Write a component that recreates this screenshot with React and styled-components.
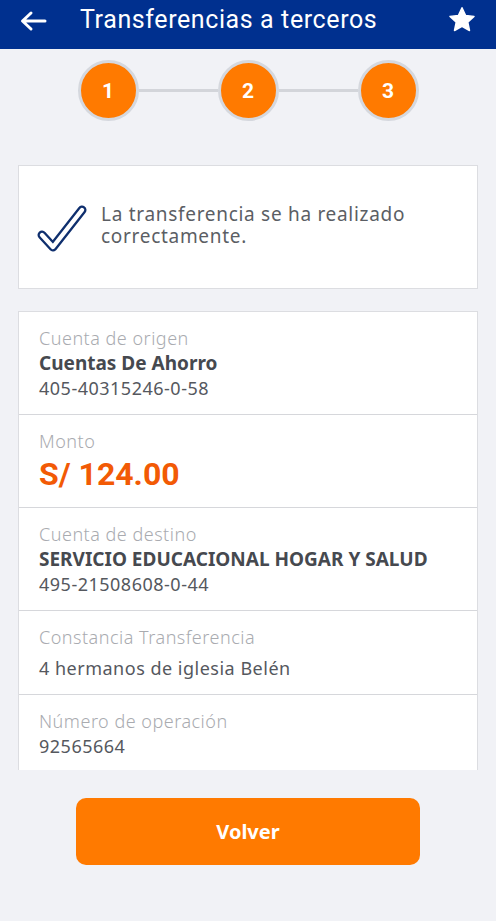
import React from "react";
import styled, { createGlobalStyle } from "styled-components";

const GlobalStyle = createGlobalStyle`
  body {
    margin: 0;
    background: #f1f2f6;
    font-family: "Noto Sans", Roboto, sans-serif;
  }
`;

const steps = [1, 2, 3];

const details = [
  { label: "Cuenta de origen", title: "Cuentas De Ahorro", value: "405-40315246-0-58" },
  { label: "Monto", amount: "S/ 124.00" },
  { label: "Cuenta de destino", title: "SERVICIO EDUCACIONAL HOGAR Y SALUD", value: "495-21508608-0-44" },
  { label: "Constancia Transferencia", value: "4 hermanos de iglesia Belén", spaced: true },
  { label: "Número de operación", value: "92565664", last: true },
];

const App = () => {
  return (
    <Page>
      <GlobalStyle />
      <Header>
        <BackIcon width="28" height="22" viewBox="0 0 28 22">
          <path d="M26 11H4M12 3L3.5 11L12 19" fill="none" stroke="#fff" strokeWidth="3" strokeLinecap="round" strokeLinejoin="round" />
        </BackIcon>
        <Title>Transferencias a terceros</Title>
        <StarIcon width="30" height="30" viewBox="0 0 24 24">
          <path d="M12 2.2l2.9 6.2 6.7.7-5 4.6 1.4 6.7L12 17l-6 3.4 1.4-6.7-5-4.6 6.7-.7z" fill="#fff" stroke="#fff" strokeWidth="1.2" strokeLinejoin="round" />
        </StarIcon>
      </Header>

      <Stepper>
        {steps.map((n, i) => (
          <React.Fragment key={n}>
            {i > 0 && <Connector />}
            <StepCircle>{n}</StepCircle>
          </React.Fragment>
        ))}
      </Stepper>

      <SuccessCard>
        <CheckIcon width="50" height="48" viewBox="0 0 50 48">
          <path d="M5 31L16 43L45 6" fill="none" stroke="#0f2f6e" strokeWidth="9" strokeLinecap="round" strokeLinejoin="round" />
          <path d="M5 31L16 43L45 6" fill="none" stroke="#fff" strokeWidth="4.4" strokeLinecap="round" strokeLinejoin="round" />
        </CheckIcon>
        <SuccessText>La transferencia se ha realizado correctamente.</SuccessText>
      </SuccessCard>

      <DetailCard>
        {details.map((d) => (
          <Row key={d.label} last={d.last}>
            <Label>{d.label}</Label>
            {d.title && <Strong>{d.title}</Strong>}
            {d.amount && <Amount>{d.amount}</Amount>}
            {d.value && <Value spaced={d.spaced}>{d.value}</Value>}
          </Row>
        ))}
      </DetailCard>

      <Actions>
        <Button>Volver</Button>
      </Actions>
    </Page>
  );
};

const Page = styled.div`
  min-height: 921px;
  background: #f1f2f6;
  display: flex;
  flex-direction: column;
`;

const Header = styled.header`
  height: 49px;
  background: #00308f;
  display: flex;
  align-items: center;
  padding: 0 19px 10px 19px;
  box-sizing: border-box;
`;

const BackIcon = styled.svg`
  flex-shrink: 0;
  margin-top: 2px;
`;

const Title = styled.h1`
  flex: 1;
  margin: 0 0 0 33px;
  color: #fff;
  font-family: Roboto, "Noto Sans", sans-serif;
  font-size: 25px;
  line-height: 30px;
  font-weight: 400;
  letter-spacing: 0.6px;
`;

const StarIcon = styled.svg`
  flex-shrink: 0;
`;

const Stepper = styled.div`
  display: flex;
  justify-content: center;
  align-items: center;
  margin-top: 11px;
  height: 61px;
`;

const StepCircle = styled.div`
  width: 55px;
  height: 55px;
  border-radius: 50%;
  background: #ff7a00;
  border: 3px solid #d5d8de;
  color: #fff;
  font-family: Roboto, "Noto Sans", sans-serif;
  font-weight: 700;
  font-size: 21px;
  display: flex;
  align-items: center;
  justify-content: center;
`;

const Connector = styled.div`
  width: 79px;
  height: 3px;
  background: #d3d5da;
`;

const SuccessCard = styled.section`
  margin: 44px 18px 0;
  height: 124px;
  box-sizing: border-box;
  background: #fff;
  border: 1px solid #dcdde1;
  display: flex;
  align-items: center;
  padding: 0 0 0 18px;
`;

const CheckIcon = styled.svg`
  flex-shrink: 0;
  margin-right: 14px;
  margin-top: 2px;
`;

const SuccessText = styled.p`
  margin: 0;
  max-width: 340px;
  color: #5b5e64;
  font-size: 19px;
  line-height: 22px;
  letter-spacing: 0.7px;
  font-weight: 400;
  margin-top: -4px;
`;

const DetailCard = styled.section`
  margin: 22px 18px 0;
  height: 459px;
  overflow: hidden;
  box-sizing: border-box;
  background: #fff;
  border: 1px solid #dcdde1;
  border-bottom: none;
`;

const Row = styled.div`
  padding: 14px 20px 13px;
  border-bottom: ${(p) => (p.last ? "none" : "1px solid #d6d7db")};
  display: flex;
  flex-direction: column;
`;

const Label = styled.div`
  color: #a9abb0;
  font-size: 18px;
  line-height: 25px;
  letter-spacing: 0.5px;
  font-weight: 300;
`;

const Strong = styled.div`
  color: #46494f;
  font-size: 19px;
  line-height: 25px;
  font-weight: 700;
`;

const Amount = styled.div`
  color: #f25a05;
  font-family: Roboto, "Noto Sans", sans-serif;
  font-size: 32px;
  line-height: 40px;
  font-weight: 700;
`;

const Value = styled.div`
  color: #55585e;
  font-size: 18px;
  line-height: 25px;
  letter-spacing: 0.5px;
  margin-top: ${(p) => (p.spaced ? "6px" : "0")};
`;

const Actions = styled.div`
  display: flex;
  justify-content: center;
  margin-top: 28px;
`;

const Button = styled.button`
  width: 344px;
  height: 67px;
  border: none;
  border-radius: 10px;
  background: #ff7a00;
  color: #fff;
  font-family: "Noto Sans", Roboto, sans-serif;
  font-size: 20px;
  font-weight: 700;
`;

export default App;
